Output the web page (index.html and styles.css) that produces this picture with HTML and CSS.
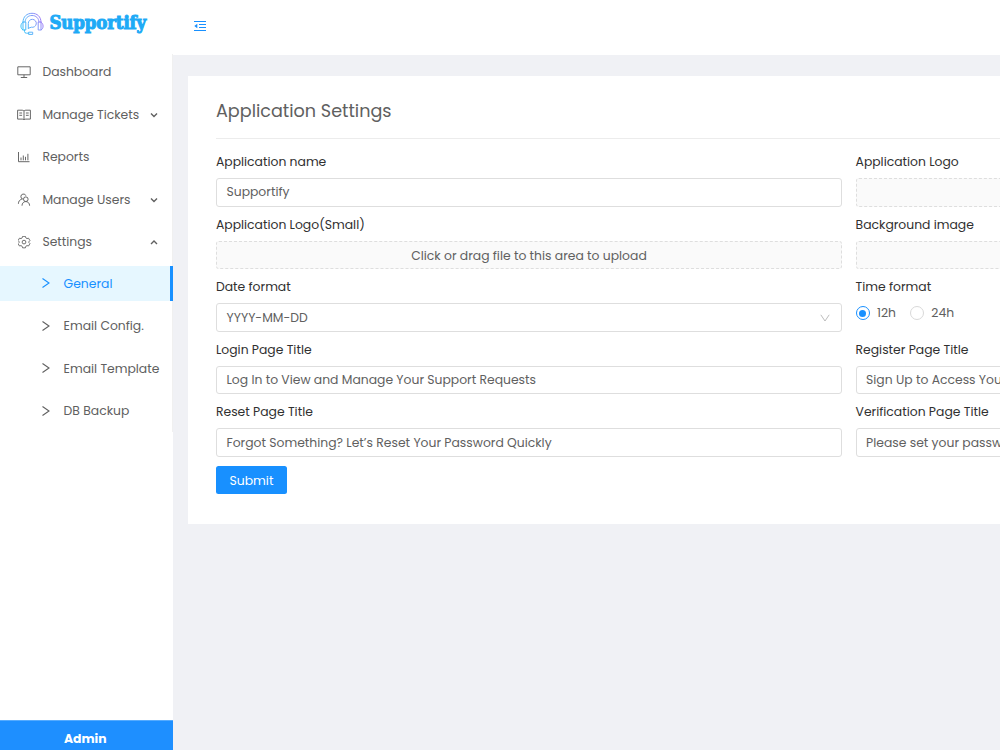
FILE: index.html
```html
<!DOCTYPE html>
<html lang="en">
<head>
<meta charset="utf-8">
<title>Supportify</title>
<link rel="stylesheet" href="styles.css">
</head>
<body>
<div class="app">
  <aside class="sidebar">
    <div class="brand">
      <svg class="brand-mark" viewBox="0 0 24 24" fill="none" stroke="url(#g)" stroke-width="1" stroke-linecap="round" stroke-linejoin="round">
        <defs><linearGradient id="g" gradientUnits="userSpaceOnUse" x1="1" y1="18" x2="22" y2="8"><stop offset="0" stop-color="#35c3f8"/><stop offset=".5" stop-color="#6baefa"/><stop offset="1" stop-color="#a07af6"/></linearGradient></defs>
        <path d="M3 10C3 4.500 7 1.300 12 1.300S21 4.500 21 10M5 10C5.300 6 8 3.500 12 3.500S18.700 6 19 10"/>
        <path d="M3 10h2.800v8H3M3 10.300C.2 11 .2 17 3 17.800V10.300M21 10h-2.800v8H21M21 10.300c2.800.7 2.800 6.700 0 7.500V10.300"/>
        <path d="M8.300 16.300V11.500a4 4 0 1 1 3 3.700L8.300 16.300"/>
        <path d="M4.500 18v1.500q0 1.700 2 1.700h2.300M9 20.200h3.700v2.200H9z"/>
      </svg>
      <span class="brand-name">Supportify</span>
    </div>
    <nav class="menu">
      <a class="item"><svg class="icon" viewBox="0 0 14 14"><path d="M.8 1.800h12.400v8H.8zM7 9.800v2.500M3.800 12.500h6.400"/></svg><span>Dashboard</span></a>
      <a class="item"><svg class="icon" viewBox="0 0 14 14"><path d="M.6 2.200h4.600Q7 2.300 7 3.200q0-.9 1.800-1h4.600v8.900H8.800Q7 11.100 7 12q0-.9-1.800-.9H.6zM7 3.200V12M2.300 5h2.800M2.300 7.300h2.800M8.900 5h2.800M8.900 7.300h2.800"/></svg><span>Manage Tickets</span><svg class="caret" viewBox="0 0 8 8"><path d="M1 2.500 4 5.500 7 2.500"/></svg></a>
      <a class="item"><svg class="icon" viewBox="0 0 14 14"><path d="M1.500 2v9.700h11M4 7.500v2.800M6.300 5.500v4.800M8.500 6.800v3.500M10.900 3.800v6.500"/></svg><span>Reports</span></a>
      <a class="item"><svg class="icon" viewBox="0 0 14 14"><circle cx="8.800" cy="6.200" r="2.300"/><path d="M5 12.700c0-5.500 7.600-5.500 7.600 0M6.200 6.200A2.600 2.600 0 1 1 8.900 2.700M1.400 10.800c.1-2.400 1-3.900 3.400-4.600"/></svg><span>Manage Users</span><svg class="caret" viewBox="0 0 8 8"><path d="M1 2.500 4 5.500 7 2.500"/></svg></a>
      <a class="item"><svg class="icon gear" viewBox="0 0 14 14"><path d="M5.500.9h3l.5 1.700 1.200.7 1.700-.4 1.500 2.600L12.200 6.800v.7l1.200 1.200-1.500 2.600-1.700-.4-1.200.7-.5 1.700h-3L5 11.600l-1.200-.7-1.700.4L.6 8.700 1.800 7.500v-.7L.6 5.500l1.500-2.600 1.700.4L5 2.600z"/><circle cx="7" cy="7.100" r="2"/></svg><span>Settings</span><svg class="caret" viewBox="0 0 8 8"><path d="M1 6 4 3 7 6"/></svg></a>
      <a class="item sub active"><svg class="chev" viewBox="0 0 10 12"><path d="M1.500 1.500 8 6 1.500 10.500"/></svg><span>General</span></a>
      <a class="item sub"><svg class="chev" viewBox="0 0 10 12"><path d="M1.500 1.500 8 6 1.500 10.500"/></svg><span>Email Config.</span></a>
      <a class="item sub"><svg class="chev" viewBox="0 0 10 12"><path d="M1.500 1.500 8 6 1.500 10.500"/></svg><span>Email Template</span></a>
      <a class="item sub"><svg class="chev" viewBox="0 0 10 12"><path d="M1.500 1.500 8 6 1.500 10.500"/></svg><span>DB Backup</span></a>
    </nav>
    <div class="user"><span>Admin</span></div>
  </aside>
  <div class="main">
    <header class="topbar">
      <svg class="fold" viewBox="0 0 12 12"><path d="M0 1.500h12M5 4.500h7M5 7.500h7M0 10.500h12"/><path class="solid" d="M3.300 3.700v4.600L.3 6z"/></svg>
    </header>
    <section class="card">
      <h1 class="title">Application Settings</h1>
      <form class="grid">
        <div class="field"><label>Application name</label><div class="box"><span>Supportify</span></div></div>
        <div class="field"><label>Application Logo</label><div class="box drop"></div></div>
        <div class="field"><label>Application Logo(Small)</label><div class="box drop"><span>Click or drag file to this area to upload</span></div></div>
        <div class="field"><label>Background image</label><div class="box drop"></div></div>
        <div class="field"><label>Date format</label><div class="box select"><span>YYYY-MM-DD</span><svg class="down" viewBox="0 0 10 10"><path d="M.8 1.800 5 8 9.200 1.800"/></svg></div></div>
        <div class="field"><label>Time format</label><div class="radios"><i class="radio on"></i><span class="option">12h</span><i class="radio"></i><span class="option">24h</span></div></div>
        <div class="field"><label>Login Page Title</label><div class="box"><span>Log In to View and Manage Your Support Requests</span></div></div>
        <div class="field"><label>Register Page Title</label><div class="box"><span>Sign Up to Access Your</span></div></div>
        <div class="field"><label>Reset Page Title</label><div class="box"><span>Forgot Something? Let’s Reset Your Password Quickly</span></div></div>
        <div class="field"><label>Verification Page Title</label><div class="box"><span>Please set your password</span></div></div>
      </form>
      <button class="submit" type="button">Submit</button>
    </section>
  </div>
</div>
</body>
</html>
```
FILE: styles.css
```css
* { box-sizing: border-box; }
body { margin: 0; background: #f0f1f5; font-family: Poppins, Inter, sans-serif; font-size: 12.36px; color: #606060; overflow: hidden; }
.app { display: flex; width: 1000px; height: 750px; overflow: hidden; }
.sidebar { width: 173.4px; flex: none; display: flex; flex-direction: column; background: #fff; }
.brand { height: 54px; flex: none; display: flex; align-items: flex-start; padding: 12px 0 0 20px; }
.brand-mark { width: 24px; height: 24px; flex: none; margin-right: 5.5px; }
.brand-name { font: bold 18.5px/21px "DejaVu Serif Condensed", "DejaVu Serif", serif; font-stretch: condensed; letter-spacing: -.15px; color: #1eaaf6; -webkit-text-stroke: 1px #1eaaf6; white-space: nowrap; }
.menu { display: flex; flex-direction: column; gap: 7.3px; border-right: 1px solid #f0f0f0; height: 378px; flex: none; }
.item { height: 35.1px; flex: none; display: flex; align-items: center; padding: 1.8px 14.5px 0 17px; white-space: nowrap; }
.item span { flex: 1; }
.icon { width: 14px; height: 14px; margin-right: 11.4px; flex: none; }
.icon, .caret, .chev, .down, .fold { fill: none; stroke: currentColor; stroke-width: .95; }
.gear { padding: .5px; }
.caret { width: 8px; height: 8px; stroke-width: 1.4; }
.sub { padding: 1.2px 0 0 41px; }
.chev { width: 10px; height: 12px; margin: -1px 12.6px 0 0; stroke-width: 1.1; flex: none; }
.active { background: #e6f7ff; color: #1890ff; border-right: 3px solid #1890ff; margin-right: -1px; padding-top: 0; }
.user { margin-top: auto; height: 30px; flex: none; background: #1e8fff; border-top: 1px solid #55abff; color: #fff; font-weight: 700; text-align: center; line-height: 35px; padding-right: 3px; }
.main { flex: 1; min-width: 0; }
.topbar { height: 54.5px; background: #fff; padding: 20px 0 0 20.6px; }
.fold { width: 12px; height: 12px; display: block; color: #1890ff; stroke-width: 1; }
.fold .solid { fill: currentColor; stroke: none; }
.card { margin: 21.5px 0 0 14.6px; width: 1322px; height: 448px; background: #fff; padding: 0 28px; }
.title { margin: 0 0 12px; height: 63px; border-bottom: 1px solid #ececec; font-size: 17.6px; font-weight: 400; line-height: 70px; }
.grid { display: grid; grid-template-columns: 626px 626px; column-gap: 13.6px; grid-auto-rows: 62.6px; }
.field { display: flex; flex-direction: column; align-items: flex-start; white-space: nowrap; }
.field label { color: #303030; height: 27px; line-height: 21px; }
.box { width: 100%; height: 28.5px; border: 1px solid #dedede; border-radius: 3px; padding: 0 9.5px; display: flex; align-items: center; background: #fff; }
.drop { background: #fafafa; border-style: dashed; justify-content: center; padding-top: 2px; }
.select { justify-content: space-between; padding-top: 1px; }
.down { width: 10px; height: 10px; color: #b8b8b8; margin-right: 1px; }
.radios { display: flex; align-items: center; height: 20px; }
.radio { width: 14.4px; height: 14.4px; border: 1px solid #d9d9d9; border-radius: 50%; display: grid; place-items: center; margin-right: 7px; }
.radio.on { border-color: #1890ff; }
.radio.on::after { content: ""; width: 7px; height: 7px; border-radius: 50%; background: #1890ff; }
.option { margin-right: 14px; }
.submit { width: 71px; height: 28px; margin-top: 2.2px; border: 0; border-radius: 2.5px; background: #1890ff; color: #fff; font: 400 12.4px Poppins, Inter, sans-serif; display: block; padding: 1px 0 0; }
```
